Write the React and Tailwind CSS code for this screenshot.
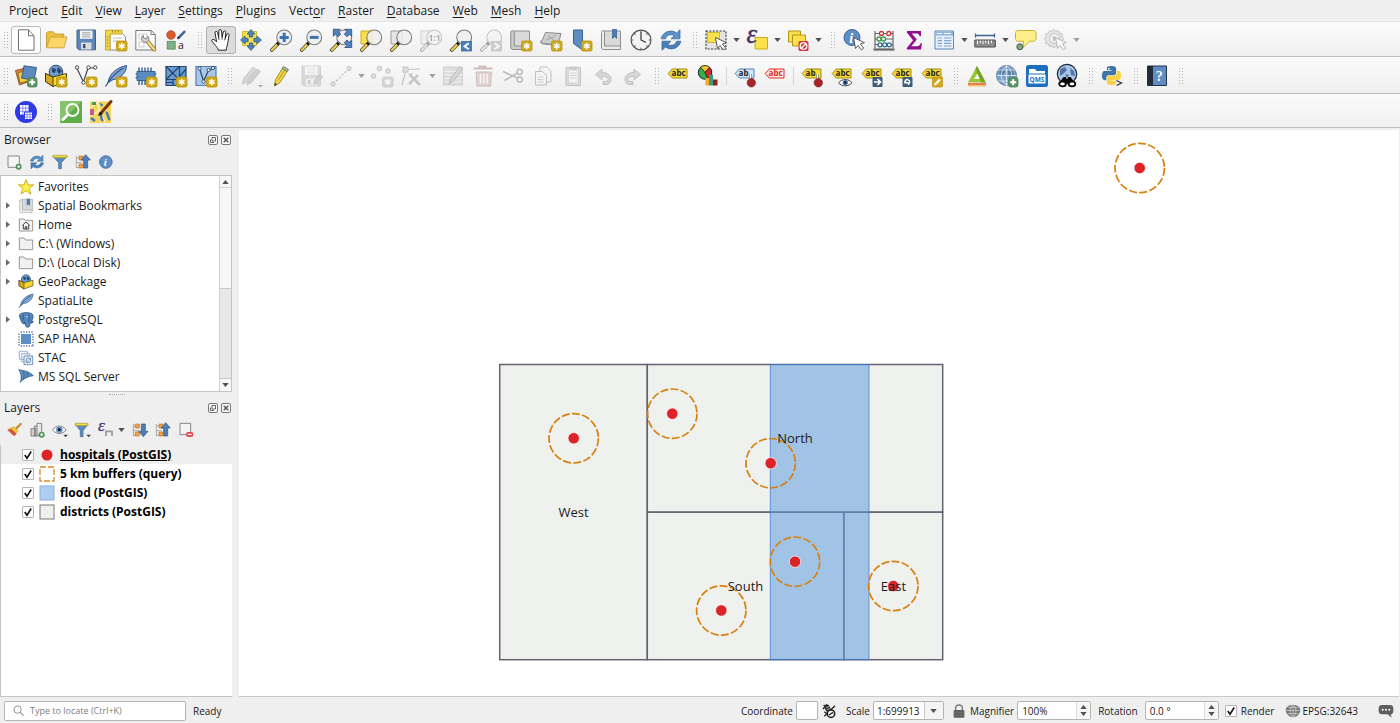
import React, { useState } from 'react';

// ---------- icon building blocks ----------

const Icon = ({ children, size = 'size-6', dim }) => (
    <svg viewBox="0 0 24 24" fill="none" className={`${size} shrink-0 overflow-visible ${dim ? 'opacity-40 grayscale' : ''}`} aria-hidden="true">
        {children}
    </svg>
);

const Caret = ({ dim, up, className = '' }) => (
    <svg viewBox="0 0 8 5" className={`w-[7px] h-[4px] shrink-0 ${dim ? 'text-[#a0a0a0]' : 'text-[#505050]'} ${className}`} aria-hidden="true">
        <path d={up ? 'M0 5L4 0l4 5z' : 'M0 0h8L4 5z'} fill="currentColor" />
    </svg>
);

const NewBadge = () => (
    <g>
        <rect x="12.5" y="13" width="10.5" height="10" rx="1.5" fill="#d0aa1c" stroke="#b8920a" strokeWidth=".8" />
        <path d="M17.7 14.8v6.4M14.9 16.3l5.6 3.4M20.5 16.3l-5.6 3.4" stroke="#fff" strokeWidth="1.5" />
    </g>
);

const PlusBadge = () => (
    <g>
        <rect x="13.5" y="13.5" width="9.5" height="9.5" rx="2" fill="#5b9466" stroke="#3f7a4c" strokeWidth=".7" />
        <path d="M18.2 15.2v6M15.2 18.2h6" stroke="#fff" strokeWidth="2" />
    </g>
);

const Lens = ({ children }) => (
    <g>
        <path d="M2.8 22l6.4-6.6" stroke="#3c3c3c" strokeWidth="3.6" strokeLinecap="round" />
        <path d="M3 21.8l4.6-4.7" stroke="#ecc94b" strokeWidth="2.4" strokeLinecap="round" />
        <path d="M8.2 16.4l2.6-2.7" stroke="#111" strokeWidth="2.4" />
        <circle cx="15.2" cy="9.4" r="7.4" fill="#eee" fillOpacity=".85" stroke="#7c7c7c" strokeWidth="1.1" />
        {children}
    </g>
);

const Tag = ({ fill = '#f5dc34', stroke = '#a58e10', color = '#222', text = 'abc' }) => (
    <g>
        <path d="M2.2 9.5L6.3 5H21v9H6.3z" fill={fill} stroke={stroke} />
        <text x="5.6" y="12.3" fontSize="8" fontWeight="700" fontFamily="Open Sans, sans-serif" fill={color}>{text}</text>
    </g>
);

const Cursor = () => (
    <path d="M11.5 9.5l2 11 2.6-3 3.4 4.4 2.2-1.7-3.3-4.2 4-1.3z" fill="#fff" stroke="#4a4a4a" strokeWidth=".9" />
);

const Pin = () => (
    <g>
        <path d="M17.5 10v6" stroke="#777" strokeWidth="2.4" />
        <path d="M17.5 10v6" stroke="#fff" strokeWidth="1.2" />
        <circle cx="18.3" cy="18.8" r="4.2" fill="#a8242a" stroke="#7e1519" strokeWidth=".6" />
    </g>
);

const Globe = () => (
    <g>
        <circle cx="11.5" cy="11.5" r="10" fill="#7ba3cf" stroke="#6a7f9b" />
        <path d="M5 5l4-1 1 4-3 4-3-3zM13 4l5 2 1 6-4 2-2-5z" fill="#46688f" fillOpacity=".7" />
        <path d="M1.8 11.5h19.5M3.5 6h16M3.5 17h16M11.5 1.5v20M11.5 1.5c-7 6-7 14 0 20M11.5 1.5c7 6 7 14 0 20" stroke="#e8f0f8" strokeWidth=".8" />
    </g>
);

// ---------- project toolbar ----------

const NewProject = () => (
    <Icon><path d="M4.5 1.8h10l5.5 6v14.4H4.5z" fill="#fff" stroke="#707070" /><path d="M14.5 1.8v6H20" stroke="#707070" /></Icon>
);
const OpenProject = () => (
    <Icon>
        <path d="M2.5 19.5V5.2l1.2-1.4h5.6L11 6h8.8v3" fill="#f0bf3c" stroke="#c39a2e" strokeWidth=".9" />
        <path d="M2.5 19.8L6.4 9H23l-3 10.8z" fill="#fcd668" stroke="#c9a136" strokeWidth=".9" />
    </Icon>
);
const Disk = () => (
    <g>
        <path d="M3 2h18.5v19.8H4.8L3 20z" fill="#5f86b9" stroke="#41618d" />
        <path d="M6 2.5h12.5v8.3H6z" fill="#f5f5f5" />
        <path d="M8 4.8h8.5M8 6.8h8.5M8 8.8h8.5" stroke="#9a9a9a" strokeWidth=".9" />
        <path d="M7 14.5h10.5v7H7z" fill="#dcdcdc" /><path d="M9 16h2.4v4.2H9z" fill="#34527b" />
    </g>
);
const SaveProject = () => <Icon><Disk /></Icon>;
const NewLayout = () => (
    <Icon>
        <path d="M6 5.5h12.3l3.2 3.2V22H6z" fill="#fff" stroke="#8a8a8a" />
        <path d="M1.5 2.2H18V6H6v16H1.5z" fill="#f5d94a" stroke="#c0a021" strokeWidth=".9" />
        <path d="M4.5 9H2.5M4.5 12H2.5M4.5 15H2.5M4.5 18H2.5M8.5 2.5v2M11.5 2.5v2M14.5 2.5v2" stroke="#8d7510" strokeWidth=".8" />
        <path d="M9 10h9M9 13h5" stroke="#bdbdbd" />
        <NewBadge />
    </Icon>
);
const LayoutManager = () => (
    <Icon>
        <path d="M1.8 2.5h15.5l4 4V22H1.8z" fill="#fafafa" stroke="#7a7a7a" /><path d="M17 2.5v4h4" stroke="#7a7a7a" />
        <path d="M5 6h8v5H5zM5 14h5v5H5z" stroke="#cfcfcf" />
        <path d="M13.5 13.5l6.8 8" stroke="#8a6f1d" strokeWidth="4" strokeLinecap="round" />
        <path d="M13.5 13.5l6.8 8" stroke="#f3dc8a" strokeWidth="2.4" strokeLinecap="round" />
        <path d="M9.3 7.2l.5 3 2.7.6 1.3-2.5c1.5 1.6 1.6 4.1-.2 5.3-2.2 1.4-5.3.6-5.9-2-.4-1.8.2-3.6 1.6-4.4z" fill="#d5d5d5" stroke="#777" strokeWidth=".9" />
    </Icon>
);
const StyleManager = () => (
    <Icon>
        <circle cx="7" cy="7" r="4.3" fill="#d95b2b" stroke="#a5401a" strokeWidth=".7" />
        <path d="M14.5 9.8l5.8-6" stroke="#42679a" strokeWidth="2.6" strokeLinecap="round" />
        <path d="M13 11.3l1.2-3 1.6 1.8z" fill="#223" />
        <rect x="3.2" y="13.3" width="8" height="7.8" fill="#7fb087" stroke="#578761" strokeWidth=".8" />
        <text x="14" y="20.5" fontSize="10.5" fontFamily="Open Sans, sans-serif" fill="#222">a</text>
    </Icon>
);

// ---------- navigation toolbar ----------

const Pan = () => (
    <Icon>
        <path d="M9.3 22.2c-.3-2-1.4-3-2.9-4.8L3 13.2c-.8-1.2.8-2.6 2-1.6l2.6 2.2L6 4.9c-.2-1.7 2-2.1 2.5-.5l1.2 5L9.9 2.8c0-1.7 2.4-1.7 2.6 0l.6 6.4 1.3-5.4c.4-1.5 2.5-1.2 2.4.5l-.6 6 1.7-4c.7-1.4 2.5-.8 2.2.8-.9 4.4-1 6.6-1.7 9.7-.4 1.7-1.2 3-1.2 5.4z" fill="#fff" stroke="#222" strokeLinejoin="round" />
        <path d="M9.7 9.4l.3 2.4M13.1 9.2v2.4M16.2 10.3l-.5 2" stroke="#222" strokeWidth=".9" />
    </Icon>
);
const PanSelection = () => (
    <Icon>
        <path d="M3.5 3.5h14v14h-14z" fill="#fae04a" stroke="#c9ac20" strokeWidth=".8" />
        <g fill="#4f83bd" stroke="#2d5687" strokeWidth=".7">
            <path d="M12 1.5l4 4.6h-2.3v3h-3.4v-3H8z" /><path d="M12 22.5l4-4.6h-2.3v-3h-3.4v3H8z" />
            <path d="M1.5 12l4.6-4v2.3h3v3.4h-3V16z" /><path d="M22.5 12l-4.6-4v2.3h-3v3.4h3V16z" />
        </g>
    </Icon>
);
const ZoomIn = () => <Icon><Lens><path d="M15.2 4.8v9.2M10.6 9.4h9.2" stroke="#3d74b0" strokeWidth="3" /></Lens></Icon>;
const ZoomOut = () => <Icon><Lens><path d="M10.8 9.4h8.8" stroke="#3d74b0" strokeWidth="3" /></Lens></Icon>;
const ZoomFull = () => (
    <Icon>
        <Lens />
        <g fill="#4f83bd" stroke="#244c7c" strokeWidth=".8">
            <path d="M4.3 1.3h7L9.2 3.5l2.6 2.6-2.7 2.7-2.6-2.6-2.2 2.1z" />
            <path d="M22.7 1.3h-7l2.2 2.2-2.6 2.6L18 8.8l2.6-2.6 2.1 2.1z" />
            <path d="M22.7 19.5h-7l2.2-2.2-2.6-2.6L18 12l2.6 2.6 2.1-2.1z" />
        </g>
    </Icon>
);
const ZoomSelection = () => <Icon><path d="M2 3h11v13H2z" fill="#fae04a" stroke="#c9ac20" /><Lens /></Icon>;
const ZoomLayer = () => <Icon><path d="M2 3h11v13H2z" fill="#e6e6e6" stroke="#9a9a9a" /><Lens /></Icon>;
const ZoomNative = () => (
    <Icon dim>
        <path d="M2 3h11v13H2z" fill="#e6e6e6" stroke="#9a9a9a" />
        <Lens><text x="9.5" y="12.5" fontSize="8.5" fontWeight="700" fontFamily="Open Sans, sans-serif" fill="#444">1:1</text></Lens>
    </Icon>
);
const ZoomLast = () => (
    <Icon><Lens /><rect x="12.5" y="13.5" width="10" height="9.5" fill="#4a80bb" stroke="#32618f" strokeWidth=".7" /><path d="M19.8 15.3l-4.3 3 4.3 3" stroke="#fff" strokeWidth="1.8" /></Icon>
);
const ZoomNext = () => (
    <Icon dim><Lens /><rect x="12.5" y="13.5" width="10" height="9.5" fill="#999" stroke="#777" strokeWidth=".7" /><path d="M15.5 15.3l4.3 3-4.3 3" stroke="#fff" strokeWidth="1.8" /></Icon>
);
const NewMapView = () => (
    <Icon>
        <path d="M5 3h15.5v16H5z" fill="#d9d9d9" stroke="#8e8e8e" /><path d="M1.8 4.5c0-2.7 3.5-2.7 3.5 0V18H20v3.5H4c-1.500 0-2.200-1-2.200-2.500z" fill="#ccc" stroke="#8e8e8e" />
        <NewBadge />
    </Icon>
);
const New3dView = () => (
    <Icon>
        <path d="M6.500 4.500L22 5.500l-3 11.500-17-2z" fill="#cfcfcf" stroke="#8c8c8c" /><path d="M2 12.500c-.8 2 .5 3.500 2.500 3.500l13 1.500" stroke="#8c8c8c" />
        <path d="M9 8l4 2 4-3M7 12l5-2 5 4" stroke="#a6a6a6" /><NewBadge />
    </Icon>
);
const NewBookmark = () => <Icon><path d="M4.500 2h9v20L4.500 15.500z" fill="#5d8cc2" stroke="#39618f" /><NewBadge /></Icon>;
const ShowBookmarks = () => (
    <Icon>
        <path d="M5 3h16.500v16H5z" fill="#d9d9d9" stroke="#8e8e8e" /><path d="M2.500 4.500c0-2.700 3-2.700 3 0V18h16v3.500h-17c-1.500 0-2-1-2-2.500z" fill="#ebebeb" stroke="#8e8e8e" />
        <path d="M13.500 1.500h4v9l-2-2-2 2z" fill="#4a7db8" stroke="#2f5b8d" strokeWidth=".7" />
    </Icon>
);
const Clock = () => (
    <Icon>
        <circle cx="12" cy="12" r="9.900" fill="#f4f4f4" stroke="#4f4f4f" strokeWidth="1.200" />
        <path d="M12 4v8l5 2.500" stroke="#333" strokeWidth="1.200" />
        <path d="M12 2.800v1.500M12 19.700v1.500M2.800 12h1.500M19.700 12h1.500M5.500 5.500l1 1M18.500 5.500l-1 1M5.500 18.500l1-1M18.500 18.500l-1-1" stroke="#555" strokeWidth="1.100" />
    </Icon>
);
const Refresh = ({ size }) => (
    <Icon size={size}>
        <path d="M2.200 10.800C3.200 4.500 11.500.5 17.500 5L21 1.800v9h-9l3.300-3.200C11.500 5.500 7.500 7 6.500 10.800z" fill="#5c92cb" stroke="#336296" strokeWidth=".7" />
        <path d="M21.800 13.200C20.800 19.500 12.500 23.500 6.500 19L3 22.200v-9h9l-3.300 3.200c3.800 2.100 7.800.6 8.800-3.200z" fill="#4a7fba" stroke="#336296" strokeWidth=".7" />
    </Icon>
);

// ---------- selection / attributes ----------

const SelectFeatures = () => (
    <Icon>
        <path d="M2 3h20v18H2z" fill="#e4e4e4" stroke="#333" strokeWidth="1.100" strokeDasharray="2 1.400" />
        <path d="M3.500 4.500h12v10h-12z" fill="#fae04a" stroke="#c9ac20" strokeWidth=".8" /><Cursor />
    </Icon>
);
const SelectExpression = () => (
    <Icon>
        <path d="M10 9.500h12.500V21H10z" fill="#fae04a" stroke="#c9ac20" />
        <text x="1.500" y="14.500" fontSize="27" fontStyle="italic" fontFamily="Liberation Serif, serif" fill="#4a2a60" stroke="#4a2a60" strokeWidth=".4">ε</text>
    </Icon>
);
const Deselect = () => (
    <Icon>
        <path d="M2.500 3h12v11h-12z" fill="#fae04a" stroke="#b3971a" /><path d="M6.500 7h13v11h-13z" fill="#fae04a" stroke="#b3971a" />
        <rect x="12.500" y="13" width="10" height="10" rx="1.500" fill="#d9363a" />
        <circle cx="17.500" cy="18" r="3.300" stroke="#fff" strokeWidth="1.300" /><path d="M15.200 20.300l4.600-4.600" stroke="#fff" strokeWidth="1.300" />
    </Icon>
);
const InfoCircle = () => (
    <g>
        <circle cx="10" cy="9.500" r="8" fill="#5d8ec4" stroke="#3b6699" />
        <text x="7.300" y="14.500" fontSize="14" fontWeight="700" fontStyle="italic" fontFamily="Liberation Serif, serif" fill="#fff">i</text>
    </g>
);
const Identify = () => <Icon><InfoCircle /><Cursor /></Icon>;
const Abacus = () => (
    <Icon>
        <path d="M3 3v17M21 3v17M3 5.500h18M3 11h18M3 16.500h18" stroke="#666" strokeWidth="1.200" /><path d="M1.500 21.500h21" stroke="#666" strokeWidth="2.200" />
        <g fill="#fff" strokeWidth="1.300">
            <g stroke="#c33"><circle cx="9.500" cy="5.500" r="2" /><circle cx="16.800" cy="5.500" r="2" /></g>
            <g stroke="#3a9a4b"><circle cx="7" cy="11" r="2" /><circle cx="11.500" cy="11" r="2" /></g>
            <g stroke="#2f6696"><circle cx="8" cy="16.800" r="2" /><circle cx="12.700" cy="16.800" r="2" /><circle cx="17.300" cy="16.800" r="2" /></g>
        </g>
    </Icon>
);
const Sigma = () => (
    <Icon><path d="M5 3h14v5.200h-1.400C17 6 16.200 5.500 14 5.500H9.800l5 6-5.500 6.700h5.500c2.200 0 3.200-.8 3.800-3H20L19 21.500H4.800v-1.600l6.300-7.600L5 4.700z" fill="#8f0f8f" /></Icon>
);
const AttributeTable = () => (
    <Icon>
        <path d="M3 3h18.500v18H3z" fill="#e9f1fb" stroke="#5b88bd" /><path d="M3.500 3.500H21v4H3.500z" fill="#8fb5e0" />
        <path d="M5.500 10H10M12 10h7.500M5.500 12.700H10M12 12.700h7.500M5.500 15.400H10M12 15.400h7.500M5.500 18H10M12 18h7.500" stroke="#86a9d3" strokeWidth="1.200" />
        <path d="M5 5.500h5M12 5.500h7" stroke="#fff" strokeWidth="1.200" />
    </Icon>
);
const Ruler = () => (
    <Icon>
        <path d="M2.500 7.500h19" stroke="#3c638f" strokeWidth="1.500" /><path d="M2.500 5.500v4M21.500 5.500v4" stroke="#3c638f" strokeWidth="1.200" />
        <path d="M1.800 12h20.500v7H1.800z" fill="#8d8d8d" stroke="#4d4d4d" />
        <path d="M4.500 12.500V16M7.300 12.500V15M10 12.500V16M12.800 12.500V15M15.500 12.500V16M18.500 12.500V15" stroke="#fff" />
    </Icon>
);
const MapTips = () => (
    <Icon>
        <path d="M4.500 2.500h14c2.500 0 3.500 1 3.500 3v4.800c0 2-1 3-3.500 3h-3L9 19.500l.5-6.200h-5c-2.200 0-3-1-3-3V5.500c0-2 .8-3 3-3z" fill="#fdf08a" stroke="#cbae2f" />
        <circle cx="5.800" cy="18.800" r="3" fill="#7fa978" stroke="#46594a" />
    </Icon>
);
const RunAction = () => (
    <Icon dim>
        <path d="M10 1.500l2 1.800 2.600-.6 1 2.500 2.600.8-.2 2.700 1.800 2-1.800 2 .2 2.600-2.600.8-1 2.500-2.600-.6-2 1.800-2-1.800-2.600.6-1-2.500-2.600-.8.200-2.600-1.800-2 1.800-2-.2-2.700 2.600-.8 1-2.500 2.600.6z" fill="#ccc" stroke="#777" />
        <circle cx="10.500" cy="10.500" r="5" fill="#eee" stroke="#777" /><path d="M8.800 7.500l5 3-5 3z" fill="#777" /><Cursor />
    </Icon>
);

// ---------- data sources ----------

const DataSource = () => (
    <Icon>
        <path d="M1.500 6.500l12-3 3 13.500-11 4z" fill="#e08137" stroke="#7f3f14" strokeWidth=".8" /><path d="M4 9l11-4 3 11-12 3z" fill="#f2cf45" stroke="#7e6a15" strokeWidth=".8" />
        <path d="M10 1.800l12.500 1.700L20 16.500 7.500 14z" fill="#5a8ac0" stroke="#26466e" strokeWidth=".8" /><PlusBadge />
    </Icon>
);
const Box = () => (
    <g>
        <circle cx="12" cy="8" r="6.800" fill="#6f9cce" stroke="#2c4a70" /><path d="M8 4l4 1-1 4-3-1zM14 3l4 4-3 3-2-3z" fill="#25456d" />
        <path d="M1.500 9.500l7 3.500 14-3.500v8L9 22.500l-7.500-5z" fill="#f7d930" stroke="#3a320a" strokeWidth=".9" /><path d="M1.500 9.500L9 13v9.500l-7.500-5z" fill="#d9aa1b" stroke="#3a320a" strokeWidth=".9" />
    </g>
);
const NewGeoPackage = () => <Icon><Box /><NewBadge /></Icon>;
const NewShapefile = () => (
    <Icon>
        <path d="M3 4.500l6.500 13.500 4.500-14h7" stroke="#444" strokeWidth="1.200" />
        <g fill="#fff" stroke="#444"><circle cx="3" cy="3.500" r="1.700" /><circle cx="9.500" cy="18.500" r="1.700" /><circle cx="14.500" cy="3.500" r="1.700" /><circle cx="21.200" cy="3.500" r="1.700" /></g>
        <NewBadge />
    </Icon>
);
const Feather = () => (
    <g>
        <path d="M4 19C5 9.500 13 3.500 22.500 1.500c0 6.500-4.500 12.500-14.500 14.500z" fill="#7fa6d3" stroke="#2f5584" /><path d="M1.500 22.500C6 14.500 12 8 19.500 4" stroke="#2f5584" strokeWidth="1.200" />
    </g>
);
const NewSpatiaLite = () => <Icon><Feather /><NewBadge /></Icon>;
const NewMemory = () => (
    <Icon>
        <path d="M3 7.500h18v9H3z" fill="#5b8ac2" stroke="#345f92" />
        <path d="M5 3.500v4M8 3.500v4M11 3.500v4M14 3.500v4M17 3.500v4M5 17v4M8 17v4M11 17v4" stroke="#345f92" strokeWidth="1.400" /><path d="M1.500 10h2M1.500 13.500h2M20.500 10h2" stroke="#345f92" />
        <NewBadge />
    </Icon>
);
const NewMesh = () => (
    <Icon>
        <path d="M2 2.500h20v19H2z" fill="#6a9bd1" stroke="#20456f" strokeWidth="1.200" />
        <path d="M2 2.500l13 13M15.500 2.500L2 15.500M22 5l-9 10.500M2 15.500h20M9 15.500v6M15.500 2.500v13M2 18.500h7" stroke="#20456f" strokeWidth="1.200" /><NewBadge />
    </Icon>
);
const NewVirtual = () => (
    <Icon>
        <path d="M2 2.500h20v19H2z" fill="#a9c7e8" stroke="#5280b4" strokeWidth="1.200" />
        <path d="M5.500 4.500l4 12.500 5-10.500 4-2" stroke="#2e4c72" strokeWidth="1.200" />
        <g fill="#fff" stroke="#2e4c72"><circle cx="5.500" cy="4.500" r="1.600" /><circle cx="9.500" cy="17.500" r="1.600" /><circle cx="14.500" cy="6" r="1.600" /><circle cx="19" cy="4" r="1.600" /></g>
        <NewBadge />
    </Icon>
);

// ---------- digitizing ----------

const Edits = () => (
    <Icon dim>
        <path d="M3 20l2-6L14 3l3.500 2.500-9 12z" fill="#aaa" stroke="#888" /><path d="M8 21l1.500-5L18 5l3.500 2.500-9 11z" fill="#999" stroke="#888" />
        <path d="M19 21h5l-2.500 2.500z" fill="#444" />
    </Icon>
);
const ToggleEdit = () => (
    <Icon>
        <path d="M5.500 22l1-6.500 8-12.700 4.800 2.800-8.300 13z" fill="#f3d541" stroke="#8c781c" strokeWidth=".8" /><path d="M14.500 2.800l4.800 2.800-1.300 2-4.800-2.800z" fill="#b9c7b0" stroke="#5c6b58" strokeWidth=".8" />
        <path d="M9 16.500l7-11" stroke="#b8981d" /><path d="M5.500 22l.4-3 2 1.300z" fill="#222" />
    </Icon>
);
const SaveEdits = () => <Icon dim><g opacity=".6"><Disk /></g><path d="M15 20l1-4 5-5 2.500 2-5.500 5.500z" fill="#aaa" stroke="#666" /></Icon>;
const Digitize = () => (
    <Icon dim><path d="M4 20L20 4.500" stroke="#777" strokeWidth="1.200" strokeDasharray="2.500 1.500" /><rect x="2" y="18" width="4" height="4" rx="1" fill="#bbb" stroke="#888" /><rect x="18" y="2.500" width="4" height="4" rx="1" fill="#bbb" stroke="#888" /></Icon>
);
const AddPoints = () => (
    <Icon dim><g fill="#bbb" stroke="#777"><circle cx="3.500" cy="12" r="2.300" /><circle cx="9.500" cy="4.500" r="2.300" /><circle cx="18" cy="7" r="2.300" /></g><NewBadge /></Icon>
);
const VertexTool = () => (
    <Icon dim>
        <path d="M2 21L6 5.500 20 5" stroke="#777" strokeWidth="1.200" /><rect x="3" y="3" width="5" height="5" fill="#bbb" stroke="#777" />
        <path d="M9 20l9-9M10 11l10 10" stroke="#888" strokeWidth="2.600" /><path d="M8 10l5-1-3 4z" fill="#888" />
    </Icon>
);
const ModifyAttrs = () => (
    <Icon dim>
        <path d="M2.500 3h19v18h-19z" fill="#bbb" stroke="#999" /><path d="M3 7.500h18M3 11h18M3 14.500h18M3 18h18" stroke="#eee" strokeWidth="1.200" />
        <path d="M8 20l1.500-5 9-12 3 2-9 12z" fill="#aaa" stroke="#666" />
    </Icon>
);
const Trash = () => (
    <Icon>
        <g opacity=".4">
            <path d="M5 8h15.500l-1 14H6z" fill="#c9a0a0" stroke="#946a6a" /><path d="M2.500 4.500h19M8.500 4V2.500h6V4" stroke="#946a6a" strokeWidth="2" /><path d="M9.500 10v9.500M12.800 10v9.500M16 10v9.500" stroke="#fff" strokeWidth="1.400" />
        </g>
    </Icon>
);
const Cut = () => (
    <Icon dim>
        <path d="M2 7.500L16.500 14M3.500 16.500L16.500 9" stroke="#666" strokeWidth="1.500" /><circle cx="18.700" cy="7.800" r="2.600" stroke="#666" strokeWidth="1.500" /><circle cx="18.700" cy="15.500" r="2.600" stroke="#666" strokeWidth="1.500" />
    </Icon>
);
const Copy = () => (
    <Icon dim>
        <path d="M9 3h7l4 4v11H9z" fill="#f3f3f3" stroke="#777" /><path d="M4.500 7.500h7l4 4V21h-11z" fill="#f3f3f3" stroke="#777" /><path d="M6.500 13h6M6.500 15.500h6M6.500 18h6" stroke="#999" />
    </Icon>
);
const Paste = () => (
    <Icon dim>
        <path d="M5 3.500h14.500v18H5z" fill="#bbb" stroke="#777" /><path d="M7.500 6H17v13H7.500z" fill="#f5f5f5" stroke="#888" strokeWidth=".6" /><path d="M9 2.500h6.500V6H9z" fill="#888" /><path d="M9 9h6.500M9 11.500h6.500M9 14h6.500" stroke="#999" />
    </Icon>
);
const undoPath = 'M4.500 10.500L11 5v3.500c6 0 9.500 3.500 9 7.500-.3 2.700-2.500 4.500-5 4.500h-3v-3h2.500c1.500 0 2.500-1 2.500-2.200 0-1.800-2-2.800-6-2.800V16z';
const Undo = () => <Icon dim><path d={undoPath} fill="#aaa" stroke="#777" /></Icon>;
const Redo = () => <Icon dim><path d={undoPath} transform="matrix(-1 0 0 1 24 0)" fill="#aaa" stroke="#777" /></Icon>;

// ---------- labels ----------

const LabelOptions = () => <Icon><Tag /></Icon>;
const Diagram = () => (
    <Icon>
        <circle cx="9" cy="8.500" r="6.700" fill="#2fb14a" stroke="#222" /><path d="M9 8.500L4.500 3c3-2 6.500-1.800 9 .3z" fill="#f4c52e" stroke="#222" strokeWidth=".8" /><path d="M9 8.500l4.700-5.200c3 3 2.500 9-2 11.500z" fill="#d5262a" stroke="#222" strokeWidth=".8" />
        <path d="M9.500 14H13v7.500H9.500z" fill="#f4a72e" /><path d="M13 10.500h4v11h-4z" fill="#3a9a75" /><path d="M17 15.500h4.500v6H17z" fill="#8a2420" />
    </Icon>
);
const PinLabels = () => <Icon><Tag fill="#cfe3fa" stroke="#4f83bd" text="ab" /><Pin /></Icon>;
const UnplacedLabels = () => <Icon><Tag fill="#fde6e6" stroke="#e02828" color="#e02828" /></Icon>;
const PinUnpin = () => <Icon><Tag text="ab" /><Pin /></Icon>;
const ShowHide = () => (
    <Icon><Tag /><path d="M8.500 18.800c3.500-4.300 10-4.300 13.500 0-3.500 4-10 4-13.500 0z" fill="#fff" stroke="#444" /><circle cx="15.300" cy="18.500" r="2.600" fill="#4676ac" /><circle cx="15.300" cy="18.500" r="1.200" fill="#111" /></Icon>
);
const MoveLabel = () => (
    <Icon><Tag /><rect x="12.500" y="13" width="10" height="10" rx="1" fill="#3f5e79" /><path d="M14 18h6M17.500 15l3 3-3 3" stroke="#fff" strokeWidth="1.700" /></Icon>
);
const RotateLabel = () => (
    <Icon><Tag /><rect x="12.500" y="13" width="10" height="10" rx="1" fill="#3f5e79" /><path d="M15 19.500c-1-3 1.500-4.500 3.200-3.700 2.300 1 1.800 4-.4 4.800M15.500 15.500v3.200h3" stroke="#fff" strokeWidth="1.400" /></Icon>
);
const ChangeLabel = () => (
    <Icon><Tag /><rect x="12.500" y="13" width="10" height="10" rx="1" fill="#d0aa1c" stroke="#b8920a" strokeWidth=".7" /><path d="M14.500 21l5.500-5.500" stroke="#fff" strokeWidth="2.200" /></Icon>
);

// ---------- plugins ----------

const GrassTriangle = () => (
    <Icon><path d="M12 2l8.800 16.500H3zM12.500 9.500L9 15h6.500z" fill="#9cc53a" fillRule="evenodd" /><path d="M12 2l8.800 16.500h-4.500L10.500 5z" fill="#76a526" /><path d="M3 20h18" stroke="#e6562a" strokeWidth="1.500" /><path d="M3 21.700h18" stroke="#f5c15a" strokeWidth="1.500" /></Icon>
);
const GlobePlus = () => <Icon><Globe /><PlusBadge /></Icon>;
const Qms = () => (
    <Icon>
        <rect x="1" y="1" width="22" height="22" rx="2.500" fill="#1c6fbe" /><path d="M4 5h6l1.500 2H20v2.500H4z" fill="#fff" /><path d="M3.500 10.500h17v9h-17z" fill="#fff" />
        <text x="12" y="17.500" fontSize="6.500" fontWeight="700" textAnchor="middle" fontFamily="Open Sans, sans-serif" fill="#1c6fbe">QMS</text>
    </Icon>
);
const SearchGlobe = () => (
    <Icon>
        <circle cx="12" cy="10" r="9.700" fill="#a8c4e6" stroke="#1d2c42" strokeWidth="1.200" /><path d="M5 5l5-2 2 3-4 4-3 2zM15 4l4 3 1 5-4-1zM10 10l4 1-2 3z" fill="#54759f" />
        <path d="M8.500 13H11v1.500h2V13h2.500l4.500 6H4z" fill="#050505" /><ellipse cx="7.500" cy="20" rx="3.300" ry="2.300" fill="#fff" stroke="#050505" strokeWidth="1.800" /><ellipse cx="17" cy="20" rx="3.300" ry="2.300" fill="#fff" stroke="#050505" strokeWidth="1.800" />
    </Icon>
);
const pythonHalf = 'M14.25.18l.9.2.73.26.59.3.45.32.34.34.25.34.16.33.1.3.04.26.02.2-.01.13V8.500l-.05.63-.13.55-.21.46-.26.38-.3.31-.33.25-.35.19-.35.14-.33.1-.3.07-.26.04-.21.02H8.770l-.69.05-.59.14-.5.22-.41.27-.33.32-.27.35-.2.36-.15.37-.1.35-.07.32-.04.27-.02.21v3.060H3.170l-.21-.03-.28-.07-.32-.12-.35-.18-.36-.26-.36-.36-.35-.46-.32-.59-.28-.73-.21-.88-.14-1.050-.05-1.230.06-1.220.16-1.040.24-.87.32-.71.36-.57.4-.44.42-.33.42-.24.4-.16.36-.1.32-.05.24-.01h.16l.06.01h8.160v-.83H6.180l-.01-2.750-.02-.37.05-.34.11-.31.17-.28.25-.26.31-.23.38-.2.44-.18.51-.15.58-.12.64-.1.71-.06.77-.04.84-.02 1.270.05z';
const Python = () => (
    <Icon>
        <g transform="translate(2 2) scale(.79)"><path d={pythonHalf} fill="#3f74a8" /><path d={pythonHalf} transform="rotate(180 12 12)" fill="#fbd245" /><circle cx="8.700" cy="3.500" r="1.100" fill="#fff" /></g>
        <path d="M16.500 16.500l5 2.500-5 2.500" stroke="#333" strokeWidth="1.300" />
    </Icon>
);
const HelpBook = () => (
    <Icon>
        <path d="M2.500 2h19v19.500h-19z" fill="#5e8cc3" stroke="#233449" /><path d="M2.500 2H8v19.500H2.500z" fill="#222c3b" />
        <text x="10.800" y="16.500" fontSize="14" fontWeight="700" fontFamily="Liberation Serif, serif" fill="#fff">?</text>
    </Icon>
);
const GridPlugin = () => (
    <Icon>
        <circle cx="12" cy="12" r="11" fill="#2f39e8" />
        <path d="M6 5h8.500v9.500H6z" fill="#fff" /><path d="M10.500 12h8v7.500h-8z" fill="#fff" stroke="#2f39e8" />
        <path d="M8.800 5v9.500M11.700 5v7M6 8.200h8.500M6 11.300h8.500M13.200 12v7.500M16 12v7.500M10.500 14.500h8M10.500 17h8" stroke="#2f39e8" strokeWidth=".5" />
    </Icon>
);
const FinderPlugin = () => (
    <Icon>
        <rect x="1" y="1" width="22" height="22" fill="#5fad48" /><path d="M1 1h22L1 23z" fill="#86c36c" />
        <circle cx="13.500" cy="10" r="6" stroke="#fff" strokeWidth="1.800" /><path d="M9 14.500l-5 5" stroke="#fff" strokeWidth="2.800" strokeLinecap="round" />
    </Icon>
);
const OsmPlugin = () => (
    <Icon>
        <rect x="1" y="1.500" width="21" height="21.500" fill="#f5d65a" /><path d="M1 8l8-6M1 16l9-5 6 11M9 2l1 9 8-1" stroke="#fdf3c0" strokeWidth="1.500" />
        <path d="M1 9h4v6H1z" fill="#c45c8e" /><path d="M3 2h4v3H3z" fill="#4a9a58" /><path d="M11 13c2 3 0 5 3 8M17 12c3 2 1 6 4 8M2 18l4 3" stroke="#3e79bb" strokeWidth="2.400" /><path d="M10 3l4 1-1 3z" fill="#3e79bb" />
        <path d="M12.500 12.500l9.500-11" stroke="#7b3410" strokeWidth="3" strokeLinecap="round" /><path d="M9 16l1.800-4.500 3 2.500z" fill="#171717" />
    </Icon>
);

// ---------- dock toolbars ----------

const small = 'size-4';
const AddSelected = () => <Icon size={small}><path d="M3 3h17v17H3z" fill="#f5f5f5" stroke="#888" strokeWidth="1.500" /><circle cx="19" cy="19" r="4.500" fill="#4c8f57" /><path d="M19 16.500v5M16.500 19h5" stroke="#fff" strokeWidth="1.600" /></Icon>;
const SmallRefresh = () => <Refresh size={small} />;
const Filter = () => <Icon size={small}><path d="M2 4h20l-8 9v9h-4v-9z" fill="#5d8cc2" stroke="#39618f" /><path d="M1.500 2h21v3.500h-21z" fill="#f0dc45" stroke="#a8952b" /></Icon>;
const FilterMenu = () => <Icon size={small}><path d="M1 4h18l-7 9v9H8v-9z" fill="#5d8cc2" stroke="#39618f" /><path d="M.5 2h19v3.500H.5z" fill="#f0dc45" stroke="#a8952b" /><path d="M17 19h7l-3.500 4z" fill="#444" /></Icon>;
const CollapseAll = () => (
    <Icon size={small}>
        <path d="M2 3v18M2 6h8M2 13h8M2 20h8" stroke="#aaa" strokeWidth="1.500" /><path d="M6 3h6v6H6zM6 15h6v6H6z" fill="#f0a04b" stroke="#c97520" />
        <path d="M16 1l7 8h-4v12h-6V9H9z" fill="#4f7fb5" stroke="#2c5382" />
    </Icon>
);
const ExpandAll = () => (
    <Icon size={small}>
        <path d="M2 3v18M2 6h8M2 13h8M2 20h8" stroke="#aaa" strokeWidth="1.500" /><path d="M5 3h6v6H5zM5 15h6v6H5z" fill="#f0a04b" stroke="#c97520" />
        <path d="M17 22l7-8h-4V3h-6v11h-4z" fill="#4f7fb5" stroke="#2c5382" />
    </Icon>
);
const Info = () => <Icon size={small}><g transform="translate(0 .8) scale(1.180)"><InfoCircle /></g></Icon>;
const Brush = () => (
    <Icon size={small}><path d="M14 11l8-8" stroke="#c98f3a" strokeWidth="3.500" strokeLinecap="round" /><path d="M3 11l9-4 6 7-6 6z" fill="#f2cb3d" stroke="#c9a42a" /><path d="M2 12l6-2 8 8-4 3z" fill="#d2553e" /></Icon>
);
const AddGroup = () => (
    <Icon size={small}><path d="M3 10h7v11H3zM8 6h6v15H8z" fill="#d5d5d5" stroke="#777" strokeWidth="1.300" /><path d="M12 2h7v18h-7z" fill="#e8e8e8" stroke="#777" strokeWidth="1.300" /><circle cx="19" cy="19" r="4.500" fill="#4c8f57" /><path d="M19 16.500v5M16.500 19h5" stroke="#fff" strokeWidth="1.600" /></Icon>
);
const Eye = () => (
    <Icon size={small}><path d="M1 12c5-8 15-8 20 0-5 7-15 7-20 0z" fill="#f7f7f7" stroke="#888" strokeWidth="1.500" /><circle cx="11" cy="11.500" r="4.800" fill="#5f8fc4" /><circle cx="11" cy="11.500" r="2" fill="#111" /><path d="M17 19h7l-3.500 4z" fill="#444" /></Icon>
);
const ExprFilter = () => (
    <Icon size={small}><text x="0" y="14" fontSize="26" fontStyle="italic" fontFamily="Liberation Serif, serif" fill="#5a3a70" stroke="#5a3a70" strokeWidth=".5">ε</text><path d="M12 21v-7h9v7" stroke="#999" strokeWidth="2.500" /></Icon>
);
const RemoveLayer = () => <Icon size={small}><path d="M3 2h16v17H3z" fill="#f3f3f3" stroke="#888" strokeWidth="1.500" /><rect x="12" y="15" width="11" height="7.500" rx="3.500" fill="#e0474c" /><path d="M14.500 18.700h6" stroke="#fff" strokeWidth="1.800" /></Icon>;

// ---------- browser tree icons ----------

const StarIcon = () => <Icon size={small}><path d="M12 .8l3.200 8h8.300l-6.600 5.200 2.500 8.700L12 17.500l-7.400 5.200L7.100 14 .5 8.800h8.300z" fill="#fdf04a" stroke="#c9a61c" strokeWidth="1.300" /></Icon>;
const BookmarkIcon = () => (
    <Icon size={small}><path d="M6 2h16v17H6z" fill="#d9d9d9" stroke="#aaa" /><path d="M2.500 3h4v15H21v4H4c-1.500 0-1.500-1-1.500-3z" fill="#eee" stroke="#aaa" /><path d="M13 1h5v11l-2.500-2.500L13 12z" fill="#4a7db8" /></Icon>
);
const FolderIcon = () => <Icon size={small}><path d="M2 3h7l2.500 3H22v14.500H2z" fill="#f1f1f1" stroke="#8f8f8f" strokeWidth="1.400" /></Icon>;
const HomeIcon = () => (
    <Icon size={small}><path d="M2 3h7l2.500 2H22v16H2z" fill="#f1f1f1" stroke="#8f8f8f" strokeWidth="1.400" /><path d="M6.500 12.500L12 7.500l5.500 5M8 12v6h8v-6M11 18v-3.500h2V18" stroke="#444" strokeWidth="1.500" /></Icon>
);
const GeoPackageIcon = () => <Icon size={small}><Box /></Icon>;
const FeatherIcon = () => <Icon size={small}><Feather /></Icon>;
const ElephantIcon = () => (
    <Icon size={small}>
        <path d="M4 2.500C8 .5 17 .5 20.500 2.500c3.500 2 2 8-.5 12l3-.3c-.5 2-3 2.800-5 2.500-.3 3.300-.5 6-3.500 6s-3.500-2-3.700-5.700C8 18 6 17.500 5 14 3.500 10 .5 5 4 2.500z" fill="#5487bb" stroke="#27507e" strokeWidth="1.300" />
        <path d="M8.500 4c-2 3-1 7 .5 9M15 4c2 2 3 6 1 11M9 14l2 3" stroke="#27507e" strokeWidth="1.300" /><circle cx="13.500" cy="7" r="1" fill="#fff" />
    </Icon>
);
const HanaIcon = () => <Icon size={small}><rect x="4.500" y="4.500" width="15" height="15" fill="#5d8ec8" /><path d="M4 1.500h18M4 22.500h18M1.500 4v18M22.500 4v18" stroke="#4a77ad" strokeWidth="2" strokeDasharray="2 2" /></Icon>;
const StacIcon = () => (
    <Icon size={small}><path d="M2 2h12v12H2zM5.500 5.500h12v12h-12z" fill="#f4f8fc" stroke="#8aa9cb" strokeWidth="1.300" /><path d="M9 9h13v13H9z" fill="#eaf1f8" stroke="#6b8fb8" strokeWidth="1.400" /><circle cx="15.500" cy="15.500" r="3.500" stroke="#5d84b0" strokeWidth="1.400" /><path d="M11 20l9-9" stroke="#5d84b0" /></Icon>
);
const MsSqlIcon = () => (
    <Icon size={small}><path d="M1 1c8 1 17 3 22 9-8 1-15 5-20 10C6 14 5 7 1 1z" fill="#5b8abf" stroke="#2f578a" /><path d="M7 2.500c3 4 3 9 0 14M13 4c2 3 2 6 0 9" stroke="#2f578a" /></Icon>
);

// ---------- toolbar contents ----------

const SEP = { sep: true };
const row1 = [
    [
        { icon: NewProject, label: 'New Project', framed: true },
        { icon: OpenProject, label: 'Open Project' },
        { icon: SaveProject, label: 'Save Project' },
        { icon: NewLayout, label: 'New Print Layout' },
        { icon: LayoutManager, label: 'Layout Manager' },
        { icon: StyleManager, label: 'Style Manager' },
    ],
    [
        { icon: Pan, label: 'Pan Map', active: true },
        { icon: PanSelection, label: 'Pan to Selection' },
        { icon: ZoomIn, label: 'Zoom In' },
        { icon: ZoomOut, label: 'Zoom Out' },
        { icon: ZoomFull, label: 'Zoom Full' },
        { icon: ZoomSelection, label: 'Zoom to Selection' },
        { icon: ZoomLayer, label: 'Zoom to Layer' },
        { icon: ZoomNative, label: 'Zoom to Native Resolution' },
        { icon: ZoomLast, label: 'Zoom Last' },
        { icon: ZoomNext, label: 'Zoom Next' },
        { icon: NewMapView, label: 'New Map View' },
        { icon: New3dView, label: 'New 3D Map View' },
        { icon: NewBookmark, label: 'New Spatial Bookmark' },
        { icon: ShowBookmarks, label: 'Show Spatial Bookmarks' },
        { icon: Clock, label: 'Temporal Controller' },
        { icon: Refresh, label: 'Refresh' },
    ],
    [
        { icon: SelectFeatures, label: 'Select Features', menu: true },
        { icon: SelectExpression, label: 'Select by Expression', menu: true },
        { icon: Deselect, label: 'Deselect Features', menu: true },
    ],
    [
        { icon: Identify, label: 'Identify Features' },
        { icon: Abacus, label: 'Field Calculator' },
        { icon: Sigma, label: 'Statistical Summary' },
        { icon: AttributeTable, label: 'Open Attribute Table', menu: true },
        { icon: Ruler, label: 'Measure Line', menu: true },
        { icon: MapTips, label: 'Show Map Tips' },
        { icon: RunAction, label: 'Run Feature Action', menu: true, dim: true },
    ],
];

const row2 = [
    [
        { icon: DataSource, label: 'Data Source Manager' },
        { icon: NewGeoPackage, label: 'New GeoPackage Layer' },
        { icon: NewShapefile, label: 'New Shapefile Layer' },
        { icon: NewSpatiaLite, label: 'New SpatiaLite Layer' },
        { icon: NewMemory, label: 'New Temporary Scratch Layer' },
        { icon: NewMesh, label: 'New Mesh Layer' },
        { icon: NewVirtual, label: 'New Virtual Layer' },
    ],
    [
        { icon: Edits, label: 'Current Edits' },
        { icon: ToggleEdit, label: 'Toggle Editing' },
        { icon: SaveEdits, label: 'Save Layer Edits' },
        { icon: Digitize, label: 'Digitize with Segment', menu: true, dim: true },
        { icon: AddPoints, label: 'Add Point Feature' },
        { icon: VertexTool, label: 'Vertex Tool', menu: true, dim: true },
        { icon: ModifyAttrs, label: 'Modify Attributes' },
        { icon: Trash, label: 'Delete Selected' },
        { icon: Cut, label: 'Cut Features' },
        { icon: Copy, label: 'Copy Features' },
        { icon: Paste, label: 'Paste Features' },
        { icon: Undo, label: 'Undo' },
        { icon: Redo, label: 'Redo' },
    ],
    [
        { icon: LabelOptions, label: 'Layer Labeling Options' },
        { icon: Diagram, label: 'Layer Diagram Options' },
        SEP,
        { icon: PinLabels, label: 'Highlight Pinned Labels' },
        { icon: UnplacedLabels, label: 'Toggle Unplaced Labels' },
        SEP,
        { icon: PinUnpin, label: 'Pin/Unpin Labels' },
        { icon: ShowHide, label: 'Show/Hide Labels' },
        { icon: MoveLabel, label: 'Move Label' },
        { icon: RotateLabel, label: 'Rotate Label' },
        { icon: ChangeLabel, label: 'Change Label Properties' },
    ],
    [
        { icon: GrassTriangle, label: 'Terrain Plugin' },
        { icon: GlobePlus, label: 'Add Web Map' },
        { icon: Qms, label: 'QuickMapServices' },
        { icon: SearchGlobe, label: 'Search QMS' },
    ],
    [{ icon: Python, label: 'Python Console' }],
    [{ icon: HelpBook, label: 'Help Contents' }],
    [],
];

const row3 = [
    [{ icon: GridPlugin, label: 'Grid Plugin' }],
    [
        { icon: FinderPlugin, label: 'Finder Plugin' },
        { icon: OsmPlugin, label: 'OpenStreetMap Plugin' },
    ],
];

const menus = [
    ['', 'P', 'roject', true],
    ['', 'E', 'dit'],
    ['', 'V', 'iew'],
    ['', 'L', 'ayer'],
    ['', 'S', 'ettings'],
    ['', 'P', 'lugins'],
    ['Vect', 'o', 'r'],
    ['', 'R', 'aster'],
    ['', 'D', 'atabase'],
    ['', 'W', 'eb'],
    ['', 'M', 'esh'],
    ['', 'H', 'elp'],
];

const browserItems = [
    { icon: StarIcon, name: 'Favorites' },
    { icon: BookmarkIcon, name: 'Spatial Bookmarks', open: true },
    { icon: HomeIcon, name: 'Home', open: true },
    { icon: FolderIcon, name: 'C:\\ (Windows)', open: true },
    { icon: FolderIcon, name: 'D:\\ (Local Disk)', open: true },
    { icon: GeoPackageIcon, name: 'GeoPackage', open: true },
    { icon: FeatherIcon, name: 'SpatiaLite' },
    { icon: ElephantIcon, name: 'PostgreSQL', open: true },
    { icon: HanaIcon, name: 'SAP HANA' },
    { icon: StacIcon, name: 'STAC' },
    { icon: MsSqlIcon, name: 'MS SQL Server' },
];

const hospitals = [
    [573.7, 438.3], [672.3, 413.7], [770.7, 463.2], [795, 561.7], [721.3, 610.5], [893.3, 586], [1139.7, 168],
];

const Grip = ({ first }) => (
    <div className={`shrink-0 flex justify-end ${first ? 'w-[11px] pr-[3px]' : 'w-[15px] pr-1'}`}>
        <div className="w-[5px] h-[18px] bg-[radial-gradient(circle,#b4b4b4_30%,transparent_45%)] bg-[size:3px_3px]" />
    </div>
);

const Tool = ({ item }) => {
    if (item.sep) return <div className="w-px h-[18px] mx-[3px] bg-[#d4d4d4]" />;
    const Glyph = item.icon;
    let frame = 'border-transparent';
    if (item.framed) frame = 'border-[#b9b9b9] bg-[#fdfdfd]';
    if (item.active) frame = 'border-[#b0b0b0] bg-[#dcdcdc]';
    return (
        <div className="flex items-center shrink-0">
            <button
                type="button"
                aria-label={item.label}
                className={`flex items-center justify-center w-[30px] h-7 border rounded-[3px] ${frame}`}
            >
                <Glyph />
            </button>
            {item.menu && (
                <button type="button" aria-label={`${item.label} menu`} className="flex w-[11px] h-7 items-center justify-center">
                    <Caret dim={item.dim} />
                </button>
            )}
        </div>
    );
};

const Toolbar = ({ groups, height }) => (
    <div className={`flex items-center shrink-0 pt-[2px] border-b border-[#bdbdbd] bg-gradient-to-b from-[#fbfbfb] to-[#efefef] ${height}`}>
        {groups.map((group, i) => (
            <div key={i} className="flex items-center shrink-0">
                <Grip first={i === 0} />
                {group.map((item, j) => <Tool key={j} item={item} />)}
            </div>
        ))}
    </div>
);

const DockTitle = ({ title }) => (
    <div className="flex items-center justify-between pl-1 h-[23px]">
        <h2>{title}</h2>
        <div className="flex gap-[3px] pr-px">
            <button type="button" aria-label={`Float ${title}`}>
                <svg viewBox="0 0 10 10" fill="none" className="size-[10px]"><rect x=".5" y=".5" width="9" height="9" rx="1.500" fill="#fafafa" stroke="#777" /><path d="M4 2.500h3.500V6H4zM2.500 4.500v3H6" stroke="#555" strokeWidth=".9" /></svg>
            </button>
            <button type="button" aria-label={`Close ${title}`}>
                <svg viewBox="0 0 10 10" fill="none" className="size-[10px]"><rect x=".5" y=".5" width="9" height="9" rx="1.500" fill="#fafafa" stroke="#777" /><path d="M2.700 2.700l4.600 4.600M7.300 2.700L2.700 7.300" stroke="#555" strokeWidth="1.500" /></svg>
            </button>
        </div>
    </div>
);

const CheckBox = ({ id, checked, onChange }) => (
    <span className="relative flex shrink-0">
        <input
            type="checkbox"
            id={id}
            checked={checked}
            onChange={onChange}
            className="appearance-none size-3 border border-[#b5b5b5] rounded-[1px] bg-white"
        />
        {checked && (
            <svg viewBox="0 0 12 12" fill="none" className="absolute inset-0 size-3 pointer-events-none">
                <path d="M2.800 6l2.200 3.200L9.200 2.500" stroke="#111" strokeWidth="1.600" />
            </svg>
        )}
    </span>
);

const swatches = {
    point: <circle cx="8" cy="8" r="5.500" fill="#dc2328" />,
    buffer: <rect x="1" y="1" width="14" height="14" fill="#fff" stroke="#d88a2a" strokeWidth="1.300" strokeDasharray="6 2" />,
    flood: <rect x="1" y="1" width="14" height="14" fill="#aecdf0" stroke="#8badde" />,
    district: <rect x="1" y="1" width="14" height="14" fill="#eef2ee" stroke="#7a7a7a" />,
};

const Browser = () => (
    <section className="pr-px">
        <DockTitle title="Browser" />
        <div className="flex items-center gap-[7px] pl-[6px] pb-[3px] h-6">
            {[['Add Selected Layers', AddSelected], ['Refresh', SmallRefresh], ['Filter Browser', Filter], ['Collapse All', CollapseAll], ['Properties', Info]].map(([label, Glyph]) => (
                <button key={label} type="button" aria-label={label}><Glyph /></button>
            ))}
        </div>
        <div className="flex border border-[#c4c4c4] bg-white h-[217px]">
            <ul className="flex-1 pt-px overflow-hidden">
                {browserItems.map((item) => {
                    const Glyph = item.icon;
                    return (
                        <li key={item.name} className="flex items-center h-[19px] pl-[5px]">
                            <span className="w-3">
                                {item.open && <svg viewBox="0 0 5 8" className="w-[4px] h-[7px]"><path d="M0 0l5 4-5 4z" fill="#666" /></svg>}
                            </span>
                            <Glyph />
                            <span className="pl-1">{item.name}</span>
                        </li>
                    );
                })}
            </ul>
            <div className="w-3 flex flex-col border-l border-[#d0d0d0] bg-[#f7f7f7]">
                <button type="button" aria-label="Scroll up" className="h-3 flex items-center justify-center border-b border-[#d0d0d0]"><Caret up /></button>
                <div className="flex-1" />
                <div className="h-[91px] border-t border-b border-[#c8c8c8] bg-[#e8e8e8]" />
                <button type="button" aria-label="Scroll down" className="h-3 flex items-center justify-center"><Caret /></button>
            </div>
        </div>
    </section>
);

const Layers = () => {
    const [layers, setLayers] = useState([
        { id: 'hospitals', name: 'hospitals (PostGIS)', kind: 'point', on: true, current: true },
        { id: 'buffers', name: '5 km buffers (query)', kind: 'buffer', on: true },
        { id: 'flood', name: 'flood (PostGIS)', kind: 'flood', on: true },
        { id: 'districts', name: 'districts (PostGIS)', kind: 'district', on: true },
    ]);

    const toggle = (id) => {
        setLayers((prev) => prev.map((l) => (l.id === id ? { ...l, on: !l.on } : l)));
    };

    return (
        <section className="flex flex-col flex-1 min-h-0 pr-px">
            <DockTitle title="Layers" />
            <div className="flex items-center gap-[7px] pl-[6px] h-[22px]">
                {[['Open Layer Styling', Brush], ['Add Group', AddGroup], ['Manage Map Themes', Eye], ['Filter Legend', FilterMenu]].map(([label, Glyph]) => (
                    <button key={label} type="button" aria-label={label}><Glyph /></button>
                ))}
                <button type="button" aria-label="Filter by Expression" className="flex items-center gap-1"><ExprFilter /><Caret /></button>
                {[['Expand All', ExpandAll], ['Collapse All', CollapseAll], ['Remove Layer', RemoveLayer]].map(([label, Glyph]) => (
                    <button key={label} type="button" aria-label={label}><Glyph /></button>
                ))}
            </div>
            <ul className="flex-1 mt-1 border-l border-b border-[#c4c4c4] bg-white font-bold text-black">
                {layers.map((layer) => (
                    <li key={layer.id} className={`flex items-center h-[19px] pl-[21px] ${layer.current ? 'bg-[#efefef]' : ''}`}>
                        <CheckBox id={layer.id} checked={layer.on} onChange={() => toggle(layer.id)} />
                        <svg viewBox="0 0 16 16" className="size-4 mx-[5px]" aria-hidden="true">{swatches[layer.kind]}</svg>
                        <label htmlFor={layer.id} className={layer.current ? 'underline' : ''}>{layer.name}</label>
                    </li>
                ))}
            </ul>
        </section>
    );
};

const MapCanvas = () => (
    <main className="flex-1 min-w-0 mt-[2px] mr-px bg-white border-b border-[#c9c9c9]">
        <svg viewBox="239 130 1160 566" preserveAspectRatio="xMidYMid slice" className="w-full h-full" role="img" aria-label="Map of districts and hospitals">
            <g fill="#eef1ed" stroke="#63636f" strokeWidth="1.500">
                <rect x="499.700" y="364.500" width="147.600" height="295.200" />
                <rect x="647.300" y="364.500" width="295.400" height="147.700" />
                <rect x="647.300" y="512.200" width="196.700" height="147.500" />
                <rect x="844" y="512.200" width="98.700" height="147.500" />
            </g>
            <rect x="770.300" y="364.500" width="98.700" height="295.200" fill="#5b9ce0" fillOpacity=".52" stroke="#3f78d0" strokeOpacity=".75" strokeWidth="1" />
            {hospitals.map(([x, y]) => (
                <circle key={`b${x}`} cx={x} cy={y} r="24.700" fill="none" stroke="#d9800f" strokeWidth="1.700" strokeDasharray="8 2.350" />
            ))}
            {hospitals.map(([x, y]) => (
                <circle key={x} cx={x} cy={y} r="5.700" fill="#dc2328" stroke="#fff" strokeWidth=".7" />
            ))}
            <g fontSize="13" fontFamily="Open Sans, sans-serif" fill="#1c1c1c" textAnchor="middle">
                <text x="573.500" y="517">West</text>
                <text x="795" y="443">North</text>
                <text x="745.500" y="591">South</text>
                <text x="893.500" y="591">East</text>
            </g>
        </svg>
    </main>
);

const Spin = ({ id, value, onChange }) => (
    <span className="flex items-center w-[74px] h-[19px] border border-[#b4b4b4] rounded-[2px] bg-white">
        <input id={id} value={value} onChange={(e) => onChange(e.target.value)} className="flex-1 min-w-0 pl-1 outline-none" />
        <span className="flex flex-col items-center justify-center gap-[3px] w-[14px] h-full border-l border-[#dcdcdc] bg-[#f7f7f7]">
            <button type="button" aria-label={`Increase ${id}`}><Caret up className="block" /></button>
            <button type="button" aria-label={`Decrease ${id}`}><Caret className="block" /></button>
        </span>
    </span>
);

const StatusBar = () => {
    const [zoom, setZoom] = useState('100%');
    const [rotation, setRotation] = useState('0.0 °');
    const [render, setRender] = useState(true);

    return (
        <footer className="flex items-center shrink-0 h-[26px] pt-px pl-1 pr-[6px] text-[10px] whitespace-nowrap">
            <div className="flex items-center w-[182px] h-5 pl-2 border border-[#b4b4b4] rounded-[2px] bg-white">
                <svg viewBox="0 0 12 12" fill="none" className="size-[11px]"><circle cx="5" cy="5" r="4" stroke="#888" /><path d="M8 8l3.500 3.500" stroke="#888" strokeWidth="1.200" /></svg>
                <input aria-label="Locate" placeholder="Type to locate (Ctrl+K)" className="flex-1 min-w-0 pl-[6px] text-[9px] outline-none placeholder:text-[#808080]" />
            </div>
            <span className="pl-[7px]">Ready</span>

            <div className="flex items-center ml-auto">
                <label htmlFor="coordinate" className="mr-[3px]">Coordinate</label>
                <input id="coordinate" className="w-[22px] h-[19px] border border-[#b4b4b4] rounded-[2px] bg-white" />
                <button type="button" aria-label="Toggle extents" className="mx-[3px]">
                    <Icon size={small}>
                        <path d="M4 3l5 5M9 2L3 9M21 4L5 20" stroke="#222" strokeWidth="2" /><rect x="6" y="2" width="8" height="12" rx="4" transform="rotate(-30 10 8)" fill="#333" /><path d="M8 7l5-2M9 10l5-2" stroke="#ddd" /><circle cx="15" cy="16" r="5.500" fill="#fff" stroke="#222" strokeWidth="2.500" /><path d="M12 18l6-4M5 13l4 3" stroke="#222" strokeWidth="2" />
                    </Icon>
                </button>
                <label htmlFor="scale" className="ml-[6px] mr-[3px]">Scale</label>
                <span className="relative flex items-center w-[71px] h-[19px] border border-[#b4b4b4] rounded-[2px] bg-white">
                    <select id="scale" className="appearance-none w-full h-full pl-[3px] outline-none">
                        <option>1:699913</option>
                        <option>1:500000</option>
                    </select>
                    <span className="absolute right-0 inset-y-0 w-[19px] flex items-center justify-center border-l border-[#c8c8c8] bg-[#f4f4f4] pointer-events-none"><Caret /></span>
                </span>
                <button type="button" aria-label="Lock scale" className="ml-[7px] mr-[3px]">
                    <Icon size={small}><path d="M7 11V7.500c0-6 10-6 10 0V11" stroke="#777" strokeWidth="2" /><rect x="4" y="10.500" width="16" height="11.500" rx="1" fill="#5f5f5f" /><path d="M4 14h16M4 18h16" stroke="#7d7d7d" /></Icon>
                </button>
                <label htmlFor="magnifier" className="mr-[3px]">Magnifier</label>
                <Spin id="magnifier" value={zoom} onChange={setZoom} />
                <label htmlFor="rotation" className="mx-[7px]">Rotation</label>
                <Spin id="rotation" value={rotation} onChange={setRotation} />
                <span className="flex items-center gap-1 ml-[6px]">
                    <CheckBox id="render" checked={render} onChange={() => setRender(!render)} />
                    <label htmlFor="render">Render</label>
                </span>
                <button type="button" className="flex items-center gap-px ml-[11px]">
                    <Icon size={small}>
                        <path d="M12 2.500c8 0 11 5 11 8.500s-4 10.500-11 10.500S1 14.500 1 11s3-8.500 11-8.500z" fill="#777" /><path d="M1 11h22M4 6.500h16M4 16h16M12 2v20M12 2c-6 5-6 14 0 20M12 2c6 5 6 14 0 20" stroke="#e5e5e5" strokeWidth=".9" />
                    </Icon>
                    EPSG:32643
                </button>
                <button type="button" aria-label="Messages" className="ml-5">
                    <Icon size={small}><path d="M6 3h12c3.500 0 5 2.500 5 5v3.500c0 3-1.500 5.500-4 5.500l1.500 5-6-5H6c-3.500 0-5-2.500-5-5V8c0-2.500 1.500-5 5-5z" fill="#5e5e5e" /><circle cx="7" cy="10" r="1.500" fill="#fff" /><circle cx="12" cy="10" r="1.500" fill="#fff" /><circle cx="17" cy="10" r="1.500" fill="#fff" /></Icon>
                </button>
            </div>
        </footer>
    );
};

const App = () => (
    <div className="flex flex-col h-screen overflow-hidden bg-[#efefef] text-[12px] leading-4 text-[#1a1a1a] font-['Open_Sans',sans-serif]">
        <nav className="flex items-center gap-[13px] shrink-0 pt-px pl-[9px] h-[22px] border-b border-[#e6e6e6]">
            {menus.map(([before, key, after, plain]) => (
                <button key={before + key + after} type="button">
                    {before}<span className={plain ? '' : 'underline underline-offset-2'}>{key}</span>{after}
                </button>
            ))}
        </nav>
        <Toolbar groups={row1} height="h-[35px]" />
        <Toolbar groups={row2} height="h-[37px]" />
        <Toolbar groups={row3} height="h-[34px]" />

        <div className="flex flex-1 min-h-0">
            <aside className="flex flex-col shrink-0 w-[233px] mr-[6px]">
                <Browser />
                <div className="flex justify-center items-center h-1"><span className="w-4 border-t border-dotted border-[#aaa]" /></div>
                <Layers />
            </aside>
            <MapCanvas />
        </div>
        <StatusBar />
    </div>
);

export default App;
